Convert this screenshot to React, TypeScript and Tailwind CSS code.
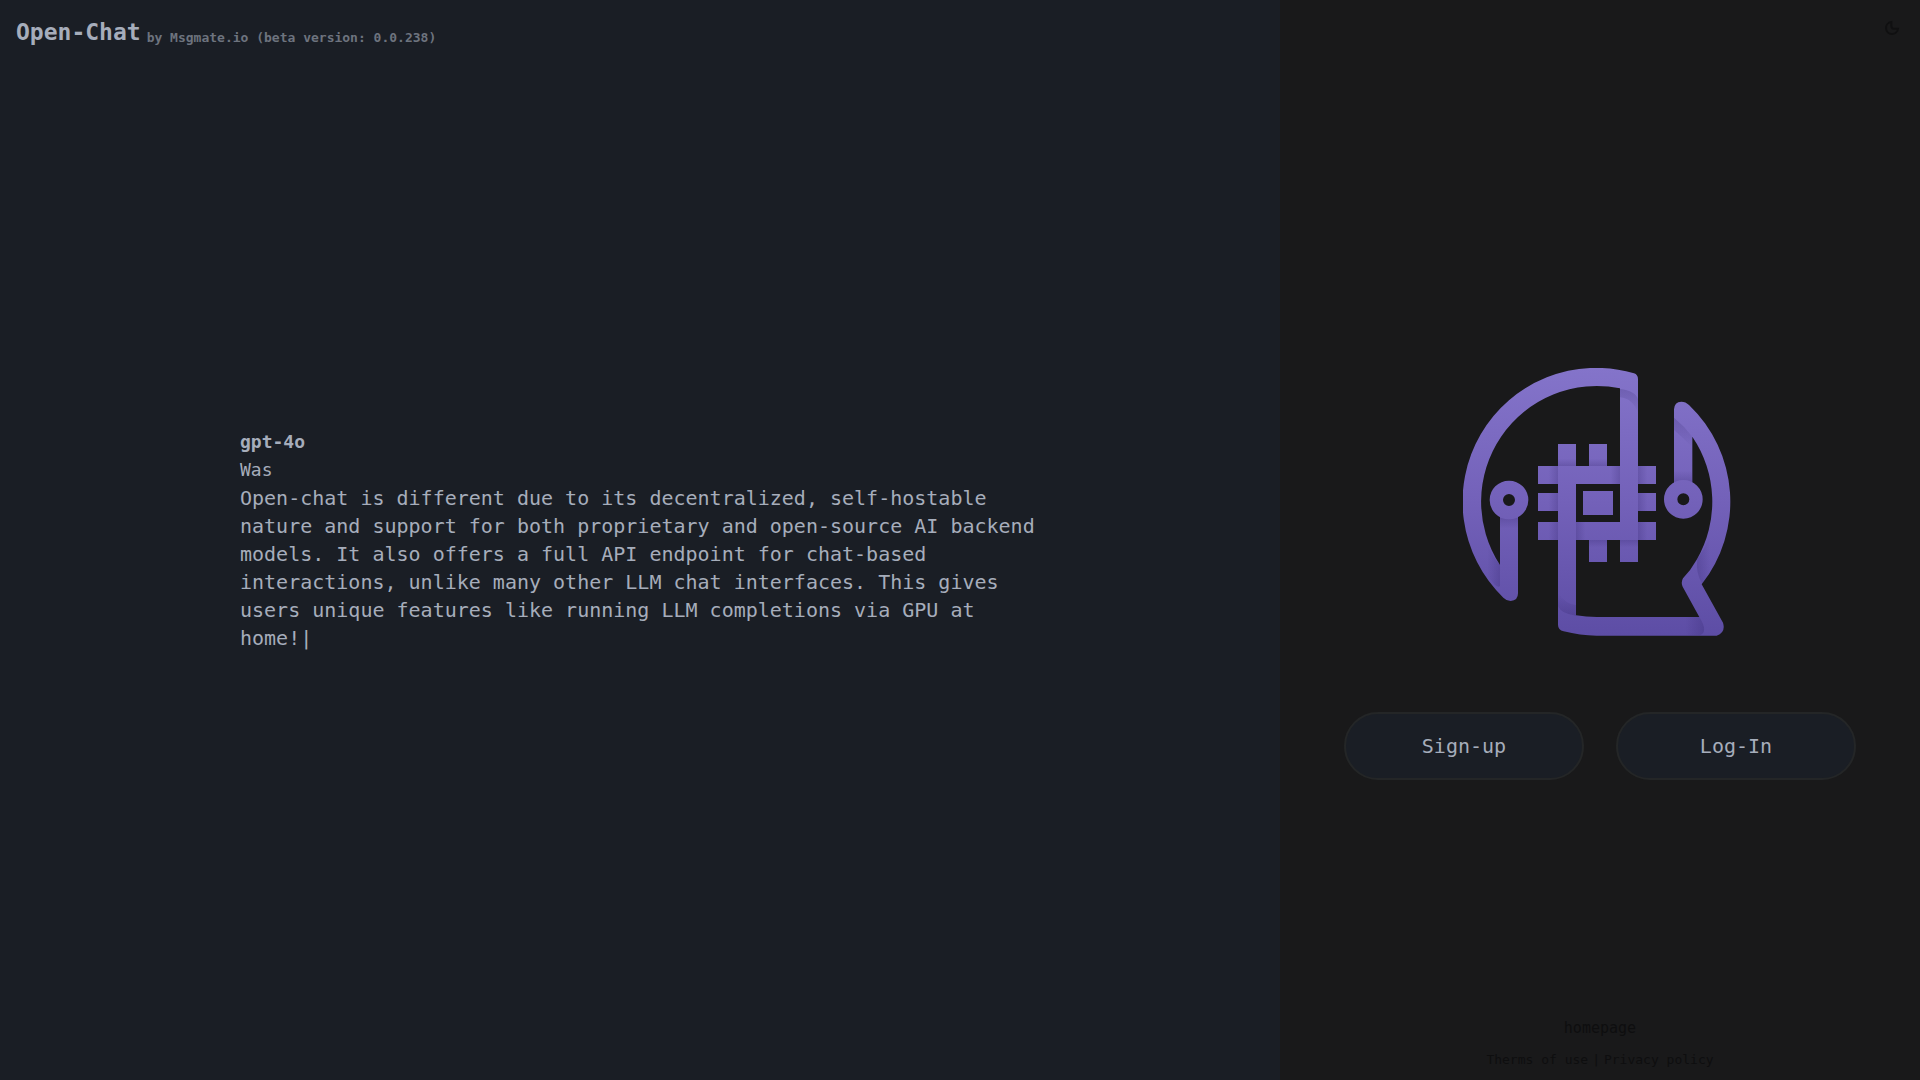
const logoShadows = [
  { x: 354, y: 326, width: 54, height: 22, fill: "url(#shadeUp)" },
  { x: 447, y: 326, width: 54, height: 22, fill: "url(#shadeUp)" },
  { x: 447, y: 570, width: 54, height: 22, fill: "url(#shadeDown)" },
  { x: 540, y: 570, width: 54, height: 22, fill: "url(#shadeDown)" },
  { x: 326, y: 348, width: 28, height: 54, fill: "url(#shadeLeft)" },
  { x: 326, y: 429, width: 28, height: 54, fill: "url(#shadeLeft)" },
  { x: 326, y: 516, width: 28, height: 54, fill: "url(#shadeLeft)" },
  { x: 594, y: 348, width: 28, height: 54, fill: "url(#shadeRight)" },
  { x: 594, y: 429, width: 28, height: 54, fill: "url(#shadeRight)" },
  { x: 594, y: 516, width: 28, height: 54, fill: "url(#shadeRight)" },
  { x: 512, y: 348, width: 28, height: 54, fill: "url(#shadeLeft)" },
  { x: 408, y: 516, width: 28, height: 54, fill: "url(#shadeRight)" },
  { x: 180, y: 503, width: 54, height: 32, fill: "url(#shadeDown)" },
  { x: 702, y: 362, width: 55, height: 34, fill: "url(#shadeUp)" },
];

const Logo = () => {
  return (
    <svg viewBox="69 54 819 804" className="w-[273px]" role="img" aria-label="Open-Chat">
      <defs>
        <linearGradient id="body" gradientUnits="userSpaceOnUse" x1="0" y1="54" x2="0" y2="858">
          <stop offset="0" stopColor="#8474ca" />
          <stop offset="0.5" stopColor="#7361b9" />
          <stop offset="1" stopColor="#5d4da5" />
        </linearGradient>
        <linearGradient id="shadeUp" x1="0" y1="1" x2="0" y2="0">
          <stop offset="0" stopColor="#1c1050" stopOpacity="0.18" />
          <stop offset="1" stopColor="#1c1050" stopOpacity="0" />
        </linearGradient>
        <linearGradient id="shadeDown" x1="0" y1="0" x2="0" y2="1">
          <stop offset="0" stopColor="#1c1050" stopOpacity="0.18" />
          <stop offset="1" stopColor="#1c1050" stopOpacity="0" />
        </linearGradient>
        <linearGradient id="shadeLeft" x1="1" y1="0" x2="0" y2="0">
          <stop offset="0" stopColor="#1c1050" stopOpacity="0.18" />
          <stop offset="1" stopColor="#1c1050" stopOpacity="0" />
        </linearGradient>
        <linearGradient id="shadeRight" x1="0" y1="0" x2="1" y2="0">
          <stop offset="0" stopColor="#1c1050" stopOpacity="0.18" />
          <stop offset="1" stopColor="#1c1050" stopOpacity="0" />
        </linearGradient>
      </defs>

      <g fill="url(#body)">
        {/* left half of the head */}
        <path d="M594 636V88Q594 74 582 70A401 401 0 0 0 190 743Q200 753 212 753Q234 752 234 730V490H180V645A347 347 0 0 1 540 115V636Z" />
        {/* right half of the head */}
        <path d="M702 410V178Q703 156 724 155Q737 155 747 165A401 401 0 0 1 785 703L849 818Q858 848 830 857H470A401 401 0 0 1 371 844Q354 840 354 824V348H408V796Q438 801 470 801H778L728 710Q722 697 729 685Q752 661 770 629A347 347 0 0 0 757 260V410Z" />
        <path d="M354 282h54v70h-54zM447 282h54v70h-54zM447 566h54v70h-54z" />
        <path d="M294 348h354v54h-354zM294 516h354v54h-354z" />
        <path d="M294 429h64v54h-64zM590 429h58v54h-58z" />
        <path d="M429 423h90v72h-90z" />
      </g>

      {logoShadows.map((s) => (
        <rect key={`${s.x}-${s.y}`} {...s} />
      ))}
      <path d="M540 117Q586 122 594 148V190Q580 146 540 142Z" fill="url(#shadeDown)" />
      <path d="M702 203Q733 228 757 260V292Q728 262 702 240Z" fill="url(#shadeDown)" />
      <path d="M354 768Q364 792 408 797V765Q378 764 354 730Z" fill="url(#shadeUp)" />
      <path d="M180 645V708Q176 714 164 704L142 677V585Q158 620 180 645Z" fill="url(#shadeLeft)" />
      <path d="M778 801Q806 846 780 856H736V801Z" fill="url(#shadeLeft)" />
      <path d="M772 627Q766 668 787 703L810 672V560Q797 590 772 627Z" fill="url(#shadeRight)" />

      <g fill="none" stroke="url(#body)" strokeWidth="40">
        <circle cx="207" cy="450" r="38" />
        <circle cx="730" cy="448" r="38" />
      </g>
    </svg>
  );
};

const App = () => {
  return (
    <div className="flex min-h-screen bg-[#19191a] font-['DejaVu_Sans_Mono',monospace] text-[#a6adbb]">
      <main className="flex w-2/3 flex-col bg-[#1a1e25]">
        <header className="flex h-16 items-start gap-1.5 px-4 pt-4 font-bold">
          <h1 className="text-[23px] leading-8">Open-Chat</h1>
          <p className="pt-3 text-[13px] leading-5 text-[#6d737e]">
            by Msgmate.io (beta version: 0.0.238)
          </p>
        </header>
        <section className="mx-auto mb-16 flex w-full max-w-[800px] grow flex-col justify-center leading-7">
          <h2 className="text-[18px] leading-7 font-bold">gpt-4o</h2>
          <p className="text-[18px] leading-7">Was</p>
          <p className="text-[20px] leading-7">
            Open-chat is different due to its decentralized, self-hostable nature and support for both
            proprietary and open-source AI backend models. It also offers a full API endpoint for
            chat-based interactions, unlike many other LLM chat interfaces. This gives users unique
            features like running LLM completions via GPU at home!|
          </p>
        </section>
      </main>

      <aside className="flex w-1/3 flex-col">
        <div className="flex h-14 items-center justify-end px-5">
          <button type="button" aria-label="Toggle theme" className="text-[#101011]">
            <svg viewBox="0 0 24 24" className="size-4" fill="none" stroke="currentColor" strokeWidth="3">
              <path d="M11 3a9 9 0 1 0 10 10h-6a4 4 0 0 1-4-4Z" />
            </svg>
          </button>
        </div>
        <div className="flex grow flex-col items-center justify-center gap-[76px] pt-[76px]">
          <Logo />
          <div className="flex gap-8 text-[20px]">
            <button type="button" className="h-[68px] w-60 rounded-full border-2 border-[#242627] bg-[#1a1e25]">
              Sign-up
            </button>
            <button type="button" className="h-[68px] w-60 rounded-full border-2 border-[#242627] bg-[#1a1e25]">
              Log-In
            </button>
          </div>
        </div>
        <footer className="flex flex-col items-center gap-2 pb-2 text-[#0e0e0f]">
          <a href="#" className="text-[15px] leading-6">
            homepage
          </a>
          <div className="flex gap-1 text-[13px] leading-6">
            <a href="#">Therms of use</a>
            <span>|</span>
            <a href="#">Privacy policy</a>
          </div>
        </footer>
      </aside>
    </div>
  );
};

export default App;
